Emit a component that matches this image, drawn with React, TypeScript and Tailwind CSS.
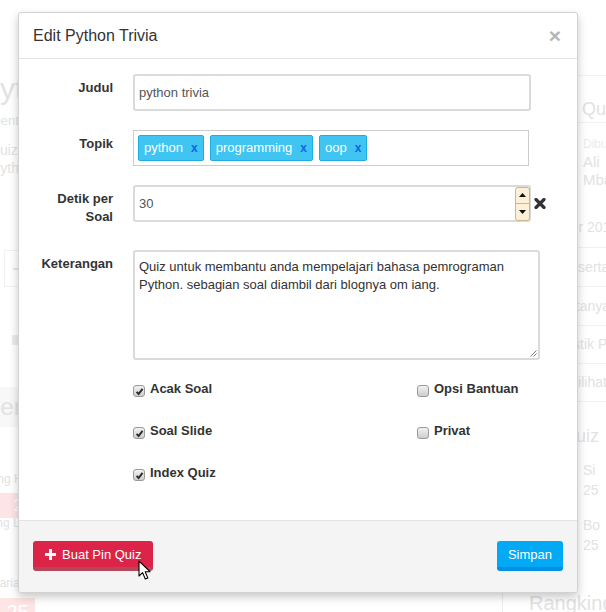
import React from "react";

// faded page sitting behind the dialog
function PageBehind() {
  return (
    <div className="flex h-full">
      <div className="-ml-[11px] w-[513px] shrink-0 text-[#e2e2e2]">
        <div className="-ml-[9px] pt-[71px] text-[30px] leading-[36px] whitespace-nowrap">Python Trivia</div>
        <div className="-ml-[15px] mt-[5px] text-[13px] leading-[18px] whitespace-nowrap">Sementara dibuat oleh Ali</div>
        <div className="mt-[11px] text-[14px] leading-[18px] whitespace-nowrap">
          Quiz untuk membantu anda
          <br />
          <span className="ml-[2px]">Python. sebagian soal</span>
        </div>
        <div className="mt-[73px] ml-[15px] flex h-[37px] items-center border border-[#f1f1f1] pl-[8px]">
          <span className="h-[2px] w-[6px] bg-[#e6e6e6]" />
        </div>
        <div className="ml-[23px] mt-[48px] h-[10px] w-[6px] rounded-[1px] bg-[#ececec]" />
        <div className="mt-[42px] flex h-[40px] items-center bg-[#f8f8f8] text-[24px] whitespace-nowrap">
          <span className="-ml-[30px]">Peserta</span>
        </div>
        <div className="mt-[43px] text-[12px] leading-[18px] whitespace-nowrap">
          <span className="-ml-[29px]">Rangking Harian</span>
        </div>
        <div className="mt-[5px] flex h-[25px] items-center bg-[#fde5e5] pl-[25px] text-[16px] text-white">2</div>
        <div className="text-[12px] leading-[10px] whitespace-nowrap">
          <span className="-ml-[8px]">Rang Lain</span>
        </div>
        <div className="mt-[49px] text-[12px] leading-[12px] whitespace-nowrap">
          <span className="ml-[2px]">Harian</span>
        </div>
        <div className="ml-[11px] mt-[9px] flex h-[40px] w-[35px] items-start justify-center bg-[#fde5e5] pt-[2px] text-[20px] leading-[24px] text-white">
          25
        </div>
      </div>

      <div className="w-[104px] shrink-0 pt-[75px] text-[#e2e2e2] whitespace-nowrap">
        <div className="flex h-[48px] items-end border-y border-[#f2f2f2] pb-[2px] pl-[80px] text-[18px] leading-[22px]">
          Quiz Lainnya
        </div>
        <div className="pl-[81px] pt-[12px] leading-[18px]">
          <div className="text-[12px] text-[#ececec]">Dibuat oleh</div>
          <div className="text-[15px]">Ali</div>
          <div className="text-[15px]">Mbak</div>
        </div>
        <div className="-ml-[3px] mt-[29px] text-[14px] leading-[18px]">12 Desember 2015</div>
        <div className="mt-[11px] text-[14px]">
          <div className="flex h-[39px] items-center border-t border-[#f2f2f2] pl-[59px]">Peserta</div>
          <div className="flex h-[39px] items-center border-t border-[#f2f2f2] pl-[52px]">Pertanyaan</div>
          <div className="flex h-[38px] items-center border-t border-[#f2f2f2] pl-[43px]">Statistik Pin</div>
          <div className="flex h-[39px] items-center border-y border-[#f2f2f2] pl-[66px]">Dilihat</div>
        </div>
        <div className="pl-[60px] pt-[22px] text-[18px] leading-[24px]">Quiz</div>
        <div className="pl-[81px] pt-[12px] text-[14px] leading-[20px]">
          <div>Si</div>
          <div>25</div>
          <div className="mt-[15px]">Bo</div>
          <div>25</div>
        </div>
        <div className="mt-[32px] border-l border-[#ececec] pl-[26px] pt-[4px] text-[20px] leading-[24px]">Rangking Teratas</div>
      </div>
    </div>
  );
}

function Checkbox({ checked }: { checked?: boolean }) {
  return (
    <span className="mt-[6px] flex h-[12px] w-[12px] shrink-0 items-center justify-center rounded-[3px] border border-[#9a9a9a] bg-gradient-to-b from-[#f2f2f2] to-[#cdcdcd]">
      {checked && (
        <svg viewBox="0 0 10 10" className="h-[9px] w-[9px]">
          <path d="M1.8 5.4 L4 7.8 L8.4 2.2" stroke="#2b2b2b" strokeWidth="2.2" fill="none" />
        </svg>
      )}
    </span>
  );
}

function Option({ label, checked }: { label: string; checked?: boolean }) {
  return (
    <label className="flex items-start gap-[5px] text-[13px] font-bold leading-[20px] text-[#333]">
      <Checkbox checked={checked} />
      {label}
    </label>
  );
}

function Tag({ label }: { label: string }) {
  return (
    <span className="flex h-[26px] items-center gap-[8px] rounded-[2px] border border-[#22ade2] bg-[#40c5f2] px-[5px] text-[13px] text-white">
      {label}
      <span className="text-[12px] font-bold text-[#1561ee]">x</span>
    </span>
  );
}

function Row({ label, children }: { label: React.ReactNode; children: React.ReactNode }) {
  return (
    <div className="flex">
      <div className="w-[80px] shrink-0 pt-[5px] text-right text-[13px] font-bold leading-[18px] text-[#333]">{label}</div>
      <div className="ml-[20px] flex items-start">{children}</div>
    </div>
  );
}

function Spinner() {
  return (
    <div className="-mr-[1px] flex h-[34px] w-[15px] flex-col overflow-hidden rounded-[3px] border border-[#c8b891] bg-[#fdf0d7]">
      <div className="flex flex-1 items-center justify-center border-b border-[#c8b891]">
        <svg width="7" height="4" viewBox="0 0 7 4">
          <path d="M0 4 L3.5 0 L7 4Z" fill="#111" />
        </svg>
      </div>
      <div className="flex flex-1 items-center justify-center">
        <svg width="7" height="4" viewBox="0 0 7 4">
          <path d="M0 0 L3.5 4 L7 0Z" fill="#111" />
        </svg>
      </div>
    </div>
  );
}

export default function App() {
  return (
    <div className="relative h-[612px] w-[606px] overflow-hidden bg-white font-['Liberation_Sans',Arial,sans-serif]">
      <PageBehind />

      <div className="absolute left-[18px] top-[12px] w-[560px] rounded-[3px] border border-[#d2d2d2] bg-white shadow-[0_4px_10px_rgba(0,0,0,0.22)]">
        <div className="flex h-[46px] items-center justify-between border-b border-[#e5e5e5] px-[14px]">
          <h4 className="text-[16px] leading-[18px] text-[#333]">Edit Python Trivia</h4>
          <span className="mr-[2px] text-[21px] font-bold leading-[20px] text-[#b5b5b5]">×</span>
        </div>

        <div className="px-[14px] pb-[37px] pt-[15px]">
          <Row label="Judul">
            <div className="flex h-[37px] w-[398px] items-center rounded-[3px] border-2 border-[#dadada] px-[4px] text-[13px] text-[#555]">
              python trivia
            </div>
          </Row>

          <div className="mt-[19px]">
            <Row label="Topik">
              <div className="flex h-[36px] w-[396px] items-center gap-[6px] border border-[#cccccc] px-[4px]">
                <Tag label="python" />
                <Tag label="programming" />
                <Tag label="oop" />
              </div>
            </Row>
          </div>

          <div className="mt-[19px]">
            <Row
              label={
                <>
                  Detik per
                  <br />
                  Soal
                </>
              }
            >
              <div className="flex h-[37px] w-[398px] items-center justify-between rounded-[3px] border-2 border-[#dadada] pl-[4px] text-[13px] text-[#555]">
                30
                <Spinner />
              </div>
              <svg width="12" height="11" viewBox="0 0 12 11" className="ml-[3px] mt-[13px]">
                <path d="M2 1.5 L10 9.5 M10 1.5 L2 9.5" stroke="#333" strokeWidth="3.2" strokeLinecap="round" />
              </svg>
            </Row>
          </div>

          <div className="mt-[24px]">
            <Row label="Keterangan">
              <div className="relative h-[110px] w-[407px] rounded-[3px] border-2 border-[#dadada] px-[4px] pt-[6px] text-[13px] leading-[18px] text-[#333]">
                Quiz untuk membantu anda mempelajari bahasa pemrograman
                <br />
                Python. sebagian soal diambil dari blognya om iang.
                <svg width="7" height="7" viewBox="0 0 7 7" className="absolute bottom-[1px] right-[1px]">
                  <path d="M0.5 6.5 L6.5 0.5 M3.5 6.5 L6.5 3.5" stroke="#777" strokeWidth="1" />
                </svg>
              </div>
            </Row>
          </div>

          <div className="ml-[100px] mt-[19px] grid w-[412px] grid-cols-[284px_1fr] gap-y-[22px]">
            <Option label="Acak Soal" checked />
            <Option label="Opsi Bantuan" />
            <Option label="Soal Slide" checked />
            <Option label="Privat" />
            <Option label="Index Quiz" checked />
          </div>
        </div>

        <div className="flex items-center justify-between rounded-b-[3px] border-t border-[#e3e3e3] bg-[#f4f4f4] px-[14px] pb-[21px] pt-[20px]">
          <button className="flex h-[30px] items-center gap-[6px] rounded-[3px] border-b-4 border-[#b5475b] bg-[#dc2448] pl-[12px] pr-[11px] pt-[1px] text-[13px] text-white">
            <svg width="11" height="11" viewBox="0 0 11 11">
              <path d="M5.5 0 V11 M0 5.5 H11" stroke="#fff" strokeWidth="3" />
            </svg>
            Buat Pin Quiz
          </button>
          <button className="h-[30px] rounded-[3px] border-b-4 border-[#0190e6] bg-[#03a9f4] px-[11px] pt-[1px] text-[13px] text-white">
            Simpan
          </button>
        </div>
      </div>

      {/* mouse pointer over the red button */}
      <svg width="14" height="21" viewBox="0 0 14 21" className="absolute left-[138px] top-[560px]">
        <path d="M1 1 L1 16 L4.6 12.6 L7.3 19 L9.8 17.9 L7.2 11.7 L12 11.7 Z" fill="#fff" stroke="#000" strokeWidth="1.1" strokeLinejoin="round" />
      </svg>
    </div>
  );
}
